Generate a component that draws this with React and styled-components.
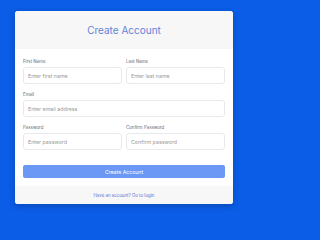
import React from "react";
import styled, { createGlobalStyle } from "styled-components";

const GlobalStyle = createGlobalStyle`
  html, body {
    margin: 0;
    padding: 0;
  }
  body {
    font-family: "Inter", "Liberation Sans", sans-serif;
    background: #0b5ce6;
  }
  * {
    box-sizing: border-box;
  }
`;

const App = () => {
  return (
    <Page>
      <GlobalStyle />
      <Card>
        <Header>
          <Title>Create Account</Title>
        </Header>
        <Body>
          <Row>
            <Field>
              <Label>First Name</Label>
              <Input type="text" placeholder="Enter first name" />
            </Field>
            <Field>
              <Label>Last Name</Label>
              <Input type="text" placeholder="Enter last name" />
            </Field>
          </Row>
          <Field>
            <Label>Email</Label>
            <Input type="email" placeholder="Enter email address" />
          </Field>
          <Row>
            <Field>
              <Label>Password</Label>
              <Input type="password" placeholder="Enter password" />
            </Field>
            <Field>
              <Label>Confirm Password</Label>
              <Input type="password" placeholder="Confirm password" />
            </Field>
          </Row>
          <SubmitButton type="button">Create Account</SubmitButton>
        </Body>
        <Footer>
          <FooterLink href="#">Have an account? Go to login</FooterLink>
        </Footer>
      </Card>
    </Page>
  );
};

export default App;

const Page = styled.div`
  min-height: 100vh;
  background: #0b5ce6;
  padding: 11px 17px 17px 15px;
`;

const Card = styled.div`
  width: 218px;
  background: #ffffff;
  border-radius: 3px;
  overflow: hidden;
  box-shadow: 0 2px 6px rgba(0, 0, 0, 0.2);
`;

const Header = styled.div`
  height: 38px;
  background: #f7f7f8;
  display: flex;
  align-items: center;
  justify-content: center;
`;

const Title = styled.h1`
  margin: 0;
  font-size: 10px;
  font-weight: 400;
  color: #6483d8;
`;

const Body = styled.div`
  display: flex;
  flex-direction: column;
  gap: 7px;
  padding: 9px 8px 8px;
`;

const Row = styled.div`
  display: grid;
  grid-template-columns: minmax(0, 1fr) minmax(0, 1fr);
  gap: 4px;
`;

const Field = styled.div`
  display: flex;
  flex-direction: column;
  gap: 2px;
  min-width: 0;
`;

const Label = styled.label`
  font-size: 4.4px;
  line-height: 7px;
  color: #666a70;
`;

const Input = styled.input`
  width: 100%;
  min-width: 0;
  height: 17px;
  padding: 0 4px;
  border: 1px solid #e8e9ec;
  border-radius: 3px;
  font-family: inherit;
  font-size: 5.3px;
  color: #333;
  background: #fff;
  outline: none;

  &::placeholder {
    color: #9a9a9a;
  }
`;

const SubmitButton = styled.button`
  margin-top: 8px;
  height: 13px;
  border: none;
  border-radius: 2px;
  background: #6b97f5;
  color: #ffffff;
  font-family: inherit;
  font-size: 5.2px;
  cursor: pointer;
`;

const Footer = styled.div`
  height: 18px;
  background: #f7f7f8;
  display: flex;
  align-items: center;
  justify-content: center;
`;

const FooterLink = styled.a`
  font-size: 4.4px;
  color: #5b6fd0;
  text-decoration: none;
`;
